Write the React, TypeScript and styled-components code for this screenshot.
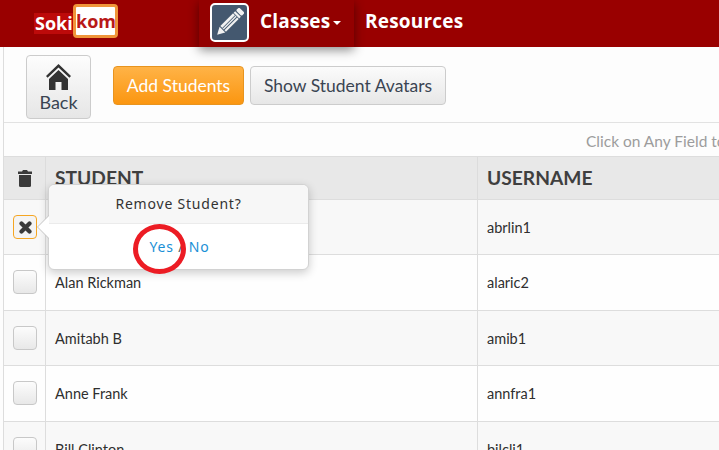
import React from "react";
import styled, { createGlobalStyle } from "styled-components";

const Global = createGlobalStyle`
  html, body { margin: 0; padding: 0; width: 719px; height: 450px; overflow: hidden; background: #fdfdfd; }
  * { box-sizing: border-box; }
  body { font-family: Lato, "Liberation Sans", sans-serif; color: #333; }
`;

const Page = styled.div`
  position: relative;
  width: 719px;
  height: 450px;
  overflow: hidden;
`;

const Nav = styled.header`
  height: 47px;
  background: #990000;
  display: flex;
  align-items: stretch;
`;

const Logo = styled.div`
  width: 199px;
  flex: none;
  padding: 4px 0 0 34px;
  display: flex;
  align-items: flex-start;
  font-family: "Open Sans", sans-serif;
  font-weight: 700;
  font-size: 18px;
`;

const LogoLeft = styled.span`
  background: #bd0a0a;
  color: #fff;
  height: 21px;
  width: 40px;
  margin-top: 9px;
  line-height: 20px;
  padding-left: 1px;
`;

const LogoRight = styled.span`
  background: #fff;
  color: #b81818;
  width: 45px;
  height: 34px;
  margin-left: -1px;
  border: 3px solid #f0953a;
  border-radius: 4px;
  line-height: 28px;
  text-align: center;
`;

const ClassesMenu = styled.div`
  width: 155px;
  flex: none;
  background: #930000;
  box-shadow: 0 3px 10px rgba(0, 0, 0, 0.45);
  padding: 3px 0 0 11px;
  display: flex;
  align-items: flex-start;
  position: relative;
`;

const PencilBox = styled.div`
  width: 39px;
  height: 39px;
  background: #44586f;
  border: 2px solid #fff;
  border-radius: 5px;
  display: flex;
  align-items: center;
  justify-content: center;
`;

const NavLabel = styled.span`
  font-family: "Open Sans", sans-serif;
  font-weight: 700;
  font-size: 19px;
  line-height: 37px;
  color: #fff;
  margin-left: 11px;
  letter-spacing: 0.2px;
`;

const Caret = styled.span`
  width: 0;
  height: 0;
  margin: 18px 0 0 3px;
  border-left: 4px solid transparent;
  border-right: 4px solid transparent;
  border-top: 4px solid #fff;
`;

const ResourcesLink = styled(NavLabel)`
  margin: 3px 0 0 11px;
`;

const Content = styled.main`
  margin-left: 3px;
  border-left: 1px solid #ddd;
`;

const Toolbar = styled.div`
  height: 76px;
  padding: 8px 0 0 22px;
  display: flex;
  align-items: flex-start;
  border-bottom: 1px solid #e2e2e2;
`;

const BackButton = styled.div`
  width: 65px;
  height: 64px;
  border: 1px solid #ccc;
  border-radius: 4px;
  background: linear-gradient(#fdfdfd, #e6e6e6);
  display: flex;
  flex-direction: column;
  align-items: center;
  font-size: 18px;
  line-height: 24px;
  color: #3a4452;
  padding-top: 8px;
`;

const BaseButton = styled.div`
  height: 39px;
  margin-top: 11px;
  border-radius: 4px;
  font-size: 17.5px;
  line-height: 37px;
  text-align: center;
`;

const AddButton = styled(BaseButton)`
  width: 131px;
  margin-left: 22px;
  color: #fff;
  background: linear-gradient(#ffb347, #fb9610);
  border: 1px solid #e8941f;
`;

const AvatarButton = styled(BaseButton)`
  width: 196px;
  margin-left: 6px;
  color: #3a4452;
  background: linear-gradient(#fbfbfb, #e7e7e7);
  border: 1px solid #ccc;
`;

const Hint = styled.div`
  height: 33px;
  padding-left: 582px;
  font-size: 15.5px;
  line-height: 36px;
  color: #9c9c9c;
  white-space: nowrap;
  overflow: hidden;
`;

const HeaderRow = styled.div`
  height: 44px;
  display: grid;
  grid-template-columns: 41px 432px 1fr;
  background: #e8e8e8;
  border-top: 1px solid #ddd;
  border-bottom: 1px solid #ddd;
`;

const HeaderCell = styled.div`
  border-left: 1px solid #dcdcdc;
  padding-left: 9px;
  font-size: 19.2px;
  font-weight: 700;
  line-height: 41px;
  color: #3f3f3f;
`;

const TrashCell = styled.div`
  padding: 13px 0 0 14px;
  line-height: 0;
`;

const Row = styled.div<{ $striped: boolean; $h: number }>`
  height: ${(p) => p.$h}px;
  display: grid;
  grid-template-columns: 41px 432px 1fr;
  background: ${(p) => (p.$striped ? "#f8f8f8" : "#fefefe")};
  border-bottom: 1px solid #ddd;
`;

const CheckCell = styled.div`
  padding: 15px 0 0 9px;
`;

const Check = styled.div<{ $active?: boolean }>`
  width: 24px;
  height: 24px;
  border-radius: 4px;
  border: 1px solid ${(p) => (p.$active ? "#f5a623" : "#c8c8c8")};
  background: ${(p) => (p.$active ? "#f4f4f4" : "linear-gradient(#fcfcfc, #e8e8e8)")};
  display: flex;
  align-items: center;
  justify-content: center;
  color: #333;
`;

const Cell = styled.div`
  border-left: 1px solid #ddd;
  padding-left: 9px;
  font-size: 14.5px;
  line-height: 55px;
  color: #2f2f2f;
`;

const Popover = styled.div`
  position: absolute;
  left: 48px;
  top: 184px;
  width: 261px;
  height: 86px;
  background: #fff;
  border: 1px solid #d2d2d2;
  border-radius: 6px;
  box-shadow: 0 3px 10px rgba(0, 0, 0, 0.2);
  font-family: "Noto Sans", "Open Sans", sans-serif;
  font-size: 14px;
  letter-spacing: 0.8px;
  &::before {
    content: "";
    position: absolute;
    left: -12px;
    top: 30px;
    width: 0;
    height: 0;
    border-top: 12px solid transparent;
    border-bottom: 12px solid transparent;
    border-right: 12px solid #c4c4c4;
  }
  &::after {
    content: "";
    position: absolute;
    left: -11px;
    top: 31px;
    width: 0;
    height: 0;
    border-top: 11px solid transparent;
    border-bottom: 11px solid transparent;
    border-right: 11px solid #fff;
  }
`;

const PopTitle = styled.div`
  height: 39px;
  background: #f7f7f7;
  border-bottom: 1px solid #ebebeb;
  border-radius: 6px 6px 0 0;
  text-align: center;
  line-height: 38px;
  color: #333;
`;

const PopBody = styled.div`
  text-align: center;
  line-height: 46px;
  color: #555;
  padding-left: 2px;
`;

const PopLink = styled.span`
  color: #1a8fd6;
`;

const Ring = styled.div`
  position: absolute;
  left: 133px;
  top: 224px;
  width: 53px;
  height: 50px;
  border: 5px solid #ec1c24;
  border-radius: 50%;
`;

const Pencil = () => (
  <svg width="29" height="29" viewBox="0 0 29 29">
    <g transform="rotate(45 14.5 14.5)" fill="#f2f2f2">
      <rect x="10.5" y="-3" width="8" height="4.5" rx="1.6" />
      <rect x="10.5" y="2.5" width="8" height="2.2" />
      <rect x="10.5" y="5.5" width="8" height="18" />
      <path d="M10.5 24.5h8L14.5 32z" />
      <rect x="13.2" y="5.5" width="0.9" height="18" fill="#44586f" />
      <rect x="15.4" y="5.5" width="0.9" height="18" fill="#44586f" />
    </g>
  </svg>
);

const Home = () => (
  <svg width="25" height="26" viewBox="0 0 25 26">
    <path d="M12.5 0 25 12l-1.6 1.8L12.5 3.6 1.6 13.8 0 12z" fill="#333" />
    <path d="M12.5 6 22 15v11h-6.5v-8h-6v8H3V15z" fill="#333" />
  </svg>
);

const Trash = () => (
  <svg width="14" height="17" viewBox="0 0 14 17">
    <path d="M5 0h4l1 1.6h4V4H0V1.6h4z" fill="#3a3a3a" />
    <path d="M1 5h12v10.5a1.5 1.5 0 0 1-1.5 1.5h-9A1.5 1.5 0 0 1 1 15.500z" fill="#3a3a3a" />
  </svg>
);

const Cross = () => (
  <svg width="13" height="13" viewBox="0 0 13 13">
    <path
      d="M2.500 2.500 10.500 10.500M10.500 2.500 2.500 10.500"
      stroke="#3a3a3a"
      strokeWidth="4.200"
      strokeLinecap="round"
      fill="none"
    />
  </svg>
);

const rows: [string, string, number][] = [
  ["", "abrlin1", 55],
  ["Alan Rickman", "alaric2", 56],
  ["Amitabh B", "amib1", 55],
  ["Anne Frank", "annfra1", 56],
  ["Bill Clinton", "bilcli1", 55],
];

export default function App() {
  return (
    <Page>
      <Global />
      <Nav>
        <Logo>
          <LogoLeft>Soki</LogoLeft>
          <LogoRight>kom</LogoRight>
        </Logo>
        <ClassesMenu>
          <PencilBox>
            <Pencil />
          </PencilBox>
          <NavLabel>Classes</NavLabel>
          <Caret />
        </ClassesMenu>
        <ResourcesLink>Resources</ResourcesLink>
      </Nav>
      <Content>
        <Toolbar>
          <BackButton>
            <Home />
            Back
          </BackButton>
          <AddButton>Add Students</AddButton>
          <AvatarButton>Show Student Avatars</AvatarButton>
        </Toolbar>
        <Hint>Click on Any Field to Edit</Hint>
        <HeaderRow>
          <TrashCell>
            <Trash />
          </TrashCell>
          <HeaderCell>STUDENT</HeaderCell>
          <HeaderCell>USERNAME</HeaderCell>
        </HeaderRow>
        {rows.map(([name, user, h], i) => (
          <Row key={user} $striped={i % 2 === 0} $h={h}>
            <CheckCell>
              <Check $active={i === 0}>{i === 0 && <Cross />}</Check>
            </CheckCell>
            <Cell>{name}</Cell>
            <Cell>{user}</Cell>
          </Row>
        ))}
      </Content>
      <Popover>
        <PopTitle>Remove Student?</PopTitle>
        <PopBody>
          <PopLink>Yes</PopLink> / <PopLink>No</PopLink>
        </PopBody>
      </Popover>
      <Ring />
    </Page>
  );
}
